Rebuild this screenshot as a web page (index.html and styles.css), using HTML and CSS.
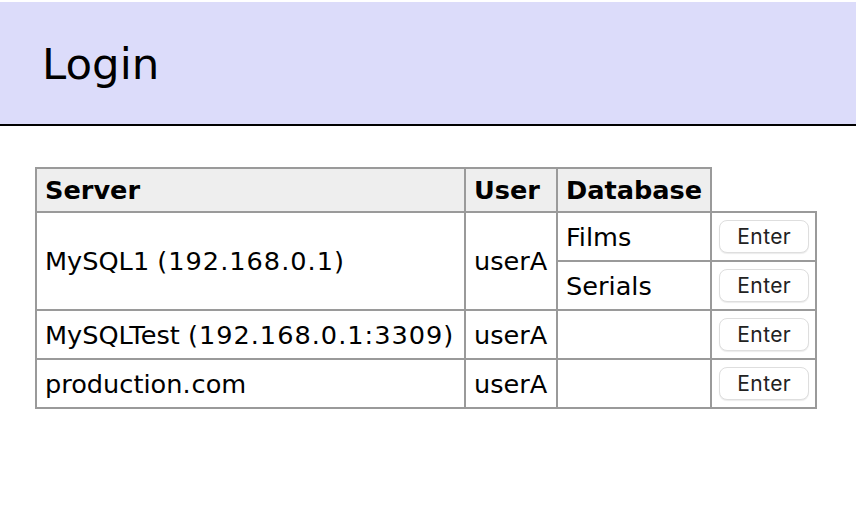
FILE: index.html
```html
<!DOCTYPE html>
<html lang="en">
<head>
<meta charset="utf-8">
<title>Login</title>
<link rel="stylesheet" href="styles.css">
</head>
<body>
<header class="topbar">
  <h1 class="title">Login</h1>
</header>
<main class="content">
  <table class="servers">
    <thead>
      <tr>
        <th class="col-server">Server</th>
        <th class="col-user">User</th>
        <th class="col-db">Database</th>
      </tr>
    </thead>
    <tbody>
      <tr>
        <td rowspan="2">MySQL1 <span class="addr">(192.168.0.1)</span></td>
        <td rowspan="2">userA</td>
        <td>Films</td>
        <td class="action"><button class="enter" type="button">Enter</button></td>
      </tr>
      <tr>
        <td>Serials</td>
        <td class="action"><button class="enter" type="button">Enter</button></td>
      </tr>
      <tr>
        <td>MySQLTest <span class="addr">(192.168.0.1:3309)</span></td>
        <td>userA</td>
        <td></td>
        <td class="action"><button class="enter" type="button">Enter</button></td>
      </tr>
      <tr>
        <td>production<span class="addr">.</span>com</td>
        <td>userA</td>
        <td></td>
        <td class="action"><button class="enter" type="button">Enter</button></td>
      </tr>
    </tbody>
  </table>
</main>
</body>
</html>
```

FILE: styles.css
```css
html, body {
  margin: 0;
  padding: 0;
  background: #fff;
}

body {
  font-family: "DejaVu Sans", Verdana, sans-serif;
  font-size: 25.6px;
  color: #000;
}

.topbar {
  margin-top: 2px;
  background: #dcdcfa;
  border-bottom: 2px solid #000;
  padding: 37px 42px 35px;
}

.title {
  margin: 0;
  font-size: 43.5px;
  font-weight: normal;
  line-height: 50px;
}

.content {
  padding: 41px 35px;
}

.servers {
  border-collapse: collapse;
}

.servers th,
.servers td {
  border: 2px solid #9a9a9a;
  padding: 0 8px;
  text-align: left;
  vertical-align: middle;
}

.servers th {
  background: #eeeeee;
  font-weight: bold;
  height: 42px;
}

.servers td {
  height: 47px;
}

.col-server { width: 411px; }
.col-user { width: 74px; }
.col-db { width: 136px; }

.addr {
  letter-spacing: 1px;
}

.servers td.action {
  padding: 0 6px 0 7px;
  width: 90px;
}

.enter {
  display: block;
  width: 90px;
  height: 33px;
  margin: 0;
  padding: 0;
  background: #fff;
  border: 1px solid #dedede;
  border-radius: 8px;
  box-shadow: 0 1px 1px rgba(0, 0, 0, 0.08);
  font-family: "Inter", "Liberation Sans", sans-serif;
  font-size: 21px;
  letter-spacing: 0.4px;
  color: #222;
}
```
